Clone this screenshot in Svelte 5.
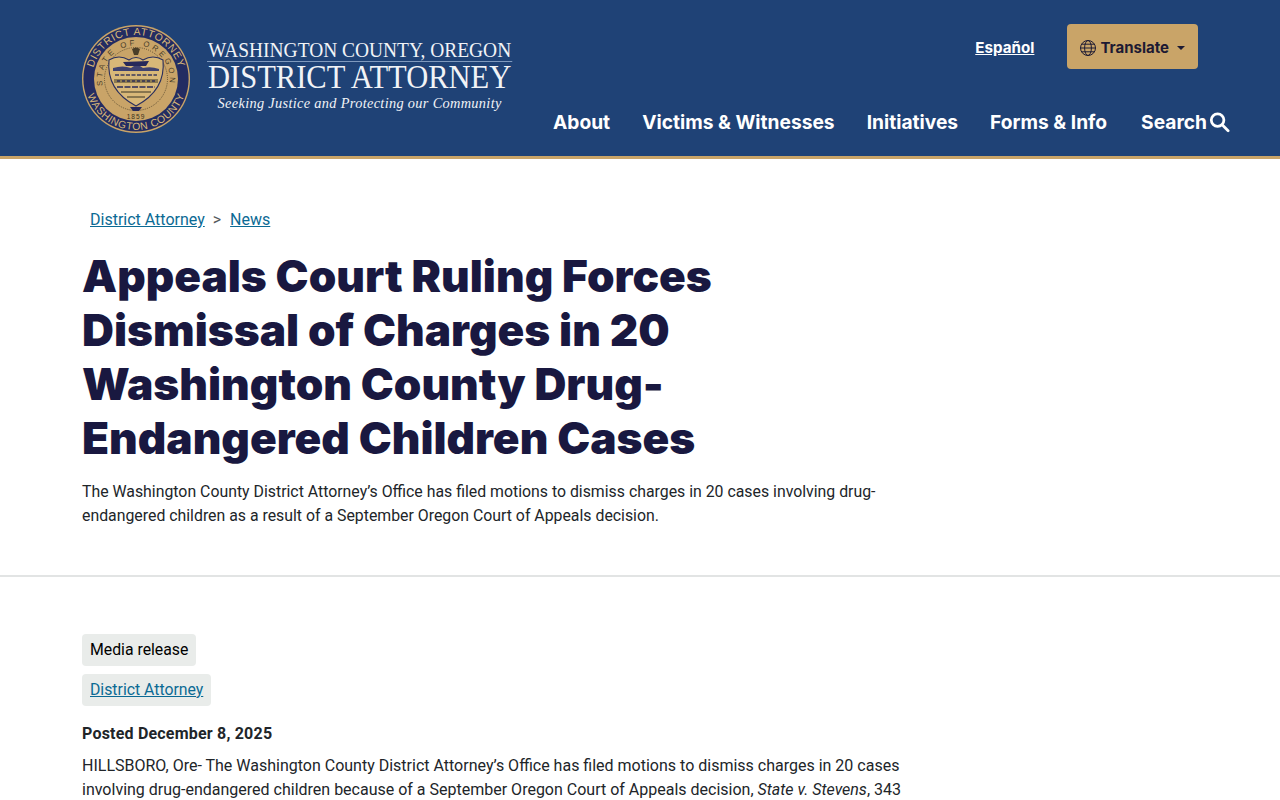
<script>
  const navItems = ['About', 'Victims & Witnesses', 'Initiatives', 'Forms & Info'];
</script>

<header class="site-header">
  <div class="brand">
    <svg class="seal" viewBox="0 0 110 110" width="110" height="110" role="img" aria-label="Seal of Washington County District Attorney">
      <defs>
        <path id="arcTop" d="M 12.4 66 A 44 44 0 1 1 97.6 66" />
        <path id="arcBottom" d="M 5 45 A 51 51 0 1 0 105 45" />
        <path id="arcState" d="M 23 66 A 33.8 33.8 0 1 1 87 66" />
      </defs>
      <circle cx="55" cy="55" r="54" fill="#c9a468" />
      <circle cx="55" cy="55" r="52.6" fill="#232c62" />
      <circle cx="55" cy="55" r="42" fill="#c9a468" />
      <text class="seal-ring"><textPath href="#arcTop" startOffset="50%" text-anchor="middle">DISTRICT ATTORNEY</textPath></text>
      <text class="seal-ring"><textPath href="#arcBottom" startOffset="50%" text-anchor="middle">WASHINGTON COUNTY</textPath></text>
      <text class="seal-state"><textPath href="#arcState" startOffset="50%" text-anchor="middle">STATE OF OREGON</textPath></text>
      <circle cx="55" cy="55" r="31.5" fill="none" stroke="#4a3e28" stroke-width="0.9" stroke-dasharray="0.9 1.3" />
      <path d="M28 36 Q38 30 48 36 Q55 31 62 36 Q72 30 82 36 Q85 66 55 82 Q25 66 28 36 Z" fill="#d8b878" stroke="#2a2f5e" stroke-width="1.1" />
      <path d="M32 44 Q42 41 50 44 L56 40 L62 44 Q70 42 78 45 L78 47 L32 47 Z" fill="#3f4270" />
      <path d="M42 38 L68 37 L65 42 L45 42 Z" fill="#27295a" />
      <path d="M34 51 H76" stroke="#3b3a5c" stroke-width="1.6" stroke-dasharray="4 1.5" />
      <path d="M33 55 H77 V59 H33 Z" fill="#8c7a50" />
      <path d="M36 57 H74" stroke="#2e2f55" stroke-width="1.5" stroke-dasharray="3 2" />
      <path d="M36 63 H74" stroke="#27295a" stroke-width="1.5" stroke-dasharray="6 1.5" />
      <path d="M40 68 H70 M46 73 H64" stroke="#6e6040" stroke-width="1.6" />
      <path d="M51 25 Q55 22 59 25 L57 31 H53 Z" fill="#4a3e28" />
      <path d="M49 83 H61 L58 87 H52 Z" fill="#27295a" />
      <text class="seal-year" x="55" y="95" text-anchor="middle">1859</text>
    </svg>
    <div class="wordmark">
      <div class="wm-county">WASHINGTON COUNTY, OREGON</div>
      <div class="wm-title">DISTRICT ATTORNEY</div>
      <div class="wm-tag">Seeking Justice and Protecting our Community</div>
    </div>
  </div>

  <div class="header-right">
    <div class="utility">
      <a class="lang" href="#es">Español</a>
      <button class="translate" type="button">
        <svg width="16" height="16" viewBox="0 0 16 16" fill="none" stroke="currentColor" stroke-width="1">
          <circle cx="8" cy="8" r="7.5" />
          <ellipse cx="8" cy="8" rx="3.4" ry="7.5" />
          <path d="M0.5 8H15.5M1.6 4.2H14.4M1.6 11.8H14.4" />
        </svg>
        <span>Translate</span>
        <span class="caret"></span>
      </button>
    </div>
    <nav class="main-nav">
      {#each navItems as item}
        <a href="#nav">{item}</a>
      {/each}
      <a class="search" href="#search">
        Search
        <svg width="21" height="21" viewBox="0 0 22 22" fill="none" stroke="currentColor" stroke-width="2.9">
          <circle cx="9" cy="8.5" r="6.6" />
          <path d="M13.8 13.4L20 19.6" stroke-linecap="round" />
        </svg>
      </a>
    </nav>
  </div>
</header>

<main>
  <section class="intro">
    <div class="breadcrumb">
      <a href="#da">District Attorney</a>
      <span class="sep">&gt;</span>
      <a href="#news">News</a>
    </div>
    <h1>Appeals Court Ruling Forces Dismissal of Charges in 20 Washington County Drug-Endangered Children Cases</h1>
    <p class="lede">The Washington County District Attorney’s Office has filed motions to dismiss charges in 20 cases involving drug-endangered children as a result of a September Oregon Court of Appeals decision.</p>
  </section>

  <section class="body">
    <div class="tags">
      <span class="tag">Media release</span>
      <span class="tag"><a href="#da">District Attorney</a></span>
    </div>
    <p class="posted">Posted December 8, 2025</p>
    <p class="copy">HILLSBORO, Ore- The Washington County District Attorney’s Office has filed motions to dismiss charges in 20 cases involving drug-endangered children because of a September Oregon Court of Appeals decision, <em>State v. Stevens</em>, 343 Or App 531 (2025). The decision changed how the law is applied in these cases.</p>
  </section>
</main>

<style>
  :global(html, body) {
    margin: 0;
    height: 800px;
    overflow: hidden;
  }

  :global(body) {
    font-family: "Roboto", "Liberation Sans", sans-serif;
    color: #212529;
    background: #fff;
  }

  .site-header {
    display: flex;
    justify-content: space-between;
    height: 156px;
    padding-left: 81px;
    padding-right: 50px;
    background: #1f4276;
    border-bottom: 3px solid #c9a468;
  }

  .brand {
    display: flex;
    gap: 16px;
    padding-top: 24px;
    align-items: flex-start;
  }

  .seal {
    flex-shrink: 0;
  }

  .seal-ring {
    font: 10.4px "Liberation Sans", sans-serif;
    fill: #d8b878;
    letter-spacing: 0.55px;
  }

  .seal-state {
    font: 7.8px "Liberation Sans", sans-serif;
    fill: #4a3e28;
    letter-spacing: 3px;
  }

  .seal-year {
    font: 6.6px "Liberation Sans", sans-serif;
    fill: #3a3220;
    letter-spacing: 1px;
  }

  .wordmark {
    padding-top: 15px;
    width: 330px;
    font-family: "Liberation Serif", serif;
    color: #f1f3f6;
    text-align: center;
    white-space: nowrap;
    transform: scaleX(0.925);
    transform-origin: left top;
  }

  .wm-county {
    font-size: 21px;
    line-height: 22px;
    border-bottom: 1px solid #7f99bd;
  }

  .wm-title {
    font-size: 33px;
    line-height: 30px;
  }

  .wm-tag {
    font-size: 15.5px;
    line-height: 21px;
    font-style: italic;
    letter-spacing: 0.35px;
  }

  .header-right {
    display: flex;
    flex-direction: column;
    align-items: flex-end;
  }

  .utility {
    display: flex;
    align-items: center;
    gap: 33px;
    padding-top: 24px;
    margin-right: 32px;
  }

  .lang {
    margin-top: 2px;
    color: #fff;
    font: 700 15.2px "Inter", sans-serif;
  }

  .translate {
    display: flex;
    align-items: center;
    gap: 4px;
    height: 45px;
    padding: 2px 13px 0 13px;
    border: 0;
    border-radius: 4px;
    background: #c9a468;
    color: #1d1a33;
    font: 700 15px "Inter", sans-serif;
  }

  .caret {
    width: 0;
    height: 0;
    margin-left: 4px;
    border-top: 4px solid currentColor;
    border-left: 4px solid transparent;
    border-right: 4px solid transparent;
  }

  .main-nav {
    display: flex;
    align-items: center;
    gap: 32px;
    margin-top: 41px;
  }

  .main-nav a {
    color: #fff;
    font: 700 19.2px "Inter", sans-serif;
    text-decoration: none;
  }

  .main-nav .search {
    display: flex;
    align-items: center;
    gap: 2px;
    margin-left: 2px;
  }

  .intro {
    padding: 49px 81px 47px 82px;
    border-bottom: 2px solid #e2e4e4;
  }

  .breadcrumb {
    display: flex;
    gap: 8px;
    padding-left: 8px;
    font-size: 16px;
    line-height: 24px;
  }

  a {
    color: #0b6a94;
  }

  .sep {
    color: #555a5e;
    padding-right: 1px;
  }

  h1 {
    width: 700px;
    margin: 17px 0 15px;
    color: #191840;
    font: 900 44.2px/54px "Inter", sans-serif;
  }

  .lede {
    width: 820px;
    margin: 0;
    font-size: 15.85px;
    line-height: 24px;
  }

  .body {
    padding: 57px 0 0 82px;
    width: 820px;
  }

  .tags {
    display: flex;
    flex-direction: column;
    align-items: flex-start;
    gap: 8px;
  }

  .tag {
    padding: 4px 8px;
    line-height: 24px;
    font-size: 15.8px;
    background: #e9ecea;
    border-radius: 4px;
    color: #000;
  }

  .posted {
    margin: 16px 0 8px;
    font-size: 16px;
    line-height: 24px;
    font-weight: 700;
    letter-spacing: 0.2px;
  }

  .copy {
    margin: 0;
    font-size: 16px;
    line-height: 24px;
  }
</style>
